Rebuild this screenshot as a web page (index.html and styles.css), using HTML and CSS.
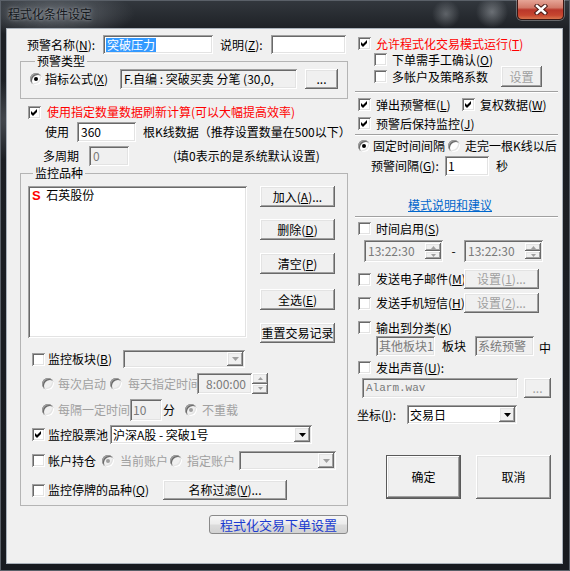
FILE: index.html
```html
<!DOCTYPE html>
<html>
<head>
    <meta charset="utf-8" />
    <title>程式化条件设定</title>
    <link rel="stylesheet" href="styles.css">
</head>
<body>
<div class="win">
    <div class="titlebar">
        <span class="title">程式化条件设定</span>
        <span class="close">
            <svg width="14" height="11" viewBox="0 0 14 11"><path class="xo" d="M3 2 L11 9 M11 2 L3 9" /><path class="xi" d="M3 2 L11 9 M11 2 L3 9" /></svg>
        </span>
    </div>
    <div class="client">
        <!-- 左边 -->
        <div class="left">
            <div class="row name-row">
                <span class="name-lb">预警名称(<u>N</u>):</span>
                <span class="ed name-ed"><span class="sel">突破压力</span></span>
                <span class="desc-lb">说明(<u>Z</u>):</span>
                <span class="ed desc-ed"></span>
            </div>

            <fieldset class="grp type-grp">
                <legend>预警类型</legend>
                <div class="row type-row">
                    <span class="rd on"></span>
                    <span class="type-lb">指标公式(<u>X</u>)</span>
                    <span class="ed ro formula">F.自编 : 突破买卖 分笔 (30,0,</span>
                    <span class="btn dots-btn">...</span>
                </div>
            </fieldset>

            <div class="row refresh-row">
                <span class="cb"><svg viewBox="0 0 11 11"><path d="M2 4 L4 6 L8 2 L8 5 L4 9 L2 7 Z" /></svg></span>
                <span class="red refresh-lb">使用指定数量数据刷新计算(可以大幅提高效率)</span>
            </div>
            <div class="row use-row">
                <span class="use-lb">使用</span>
                <span class="ed use-ed">360</span>
                <span class="use-tip">根K线数据（推荐设置数量在500以下）</span>
            </div>
            <div class="row period-row">
                <span class="period-lb">多周期</span>
                <span class="ed dis period-ed">0</span>
                <span class="period-tip">(填0表示的是系统默认设置)</span>
            </div>

            <fieldset class="grp watch-grp">
                <legend>监控品种</legend>
                <div class="list-block">
                    <div class="lst">
                        <div class="item"><b>S</b> 石英股份</div>
                    </div>
                    <div class="list-btns">
                        <span class="btn">加入(<u>A</u>)...</span>
                        <span class="btn">删除(<u>D</u>)</span>
                        <span class="btn">清空(<u>P</u>)</span>
                        <span class="btn">全选(<u>E</u>)</span>
                        <span class="btn">重置交易记录</span>
                    </div>
                </div>

                <div class="row block-row">
                    <span class="cb"></span>
                    <span class="block-lb">监控板块(<u>B</u>)</span>
                    <span class="cmb dis block-cmb"><span class="cmb-t"></span><span class="drop"><svg width="7" height="4" viewBox="0 0 7 4"><path d="M0 0 H7 L3.5 4 Z" /></svg></span></span>
                </div>
                <div class="row reload1 gray">
                    <span class="rd dis"></span>
                    <span class="rl-a">每次启动</span>
                    <span class="rd dis"></span>
                    <span class="rl-b">每天指定时间</span>
                    <span class="ed dis daytime">8:00:00</span>
                    <span class="spin ext">
                        <span class="sp"><svg width="5" height="3" viewBox="0 0 5 3"><path d="M2.5 0 L5 3 H0 Z" /></svg></span>
                        <span class="sp"><svg width="5" height="3" viewBox="0 0 5 3"><path d="M0 0 H5 L2.5 3 Z" /></svg></span>
                    </span>
                </div>
                <div class="row reload2 gray">
                    <span class="rd dis"></span>
                    <span class="rl-c">每隔一定时间</span>
                    <span class="ed dis every-ed">10</span>
                    <span class="rl-min">分</span>
                    <span class="rd dis on norl"></span>
                    <span class="rl-d">不重载</span>
                </div>
                <div class="row pool-row">
                    <span class="cb"><svg viewBox="0 0 11 11"><path d="M2 4 L4 6 L8 2 L8 5 L4 9 L2 7 Z" /></svg></span>
                    <span class="pool-lb">监控股票池</span>
                    <span class="cmb pool-cmb"><span class="cmb-t">沪深A股 - 突破1号</span><span class="drop"><svg width="7" height="4" viewBox="0 0 7 4"><path d="M0 0 H7 L3.5 4 Z" /></svg></span></span>
                </div>
                <div class="row acct-row">
                    <span class="cb"></span>
                    <span class="acct-lb">帐户持仓</span>
                    <span class="rd dis on"></span>
                    <span class="gray acct-a">当前账户</span>
                    <span class="rd dis"></span>
                    <span class="gray acct-b">指定账户</span>
                    <span class="cmb dis acct-cmb"><span class="cmb-t"></span><span class="drop"><svg width="7" height="4" viewBox="0 0 7 4"><path d="M0 0 H7 L3.5 4 Z" /></svg></span></span>
                </div>
                <div class="row halt-row">
                    <span class="cb"></span>
                    <span class="halt-lb">监控停牌的品种(<u>Q</u>)</span>
                    <span class="btn filter-btn">名称过滤(<u>V</u>)...</span>
                </div>
            </fieldset>

            <div class="row order-row">
                <span class="order-btn">程式化交易下单设置</span>
            </div>
        </div>

        <!-- 右边 -->
        <div class="right">
            <div class="row r-allow">
                <span class="cb"><svg viewBox="0 0 11 11"><path d="M2 4 L4 6 L8 2 L8 5 L4 9 L2 7 Z" /></svg></span>
                <span class="red">允许程式化交易模式运行(<u>T</u>)</span>
            </div>
            <div class="row r-manual">
                <span class="cb"></span>
                <span>下单需手工确认(<u>O</u>)</span>
            </div>
            <div class="row r-multi">
                <span class="cb"></span>
                <span class="multi-lb">多帐户及策略系数</span>
                <span class="btn dis set-btn">设置</span>
            </div>
            <div class="sep s1"></div>
            <div class="row r-pop">
                <span class="cb"><svg viewBox="0 0 11 11"><path d="M2 4 L4 6 L8 2 L8 5 L4 9 L2 7 Z" /></svg></span>
                <span class="pop-lb">弹出预警框(<u>L</u>)</span>
                <span class="cb"><svg viewBox="0 0 11 11"><path d="M2 4 L4 6 L8 2 L8 5 L4 9 L2 7 Z" /></svg></span>
                <span>复权数据(<u>W</u>)</span>
            </div>
            <div class="row r-keep">
                <span class="cb"><svg viewBox="0 0 11 11"><path d="M2 4 L4 6 L8 2 L8 5 L4 9 L2 7 Z" /></svg></span>
                <span>预警后保持监控(<u>J</u>)</span>
            </div>
            <div class="sep s2"></div>
            <div class="row r-mode">
                <span class="rd on"></span>
                <span class="fix-lb">固定时间间隔</span>
                <span class="rd"></span>
                <span class="bar-lb">走完一根K线以后</span>
            </div>
            <div class="row r-gap">
                <span class="gap-lb">预警间隔(<u>G</u>):</span>
                <span class="ed gap-ed">1</span>
                <span class="sec">秒</span>
            </div>
            <div class="row r-link">
                <span class="link">模式说明和建议</span>
            </div>
            <div class="sep s3"></div>
            <div class="row r-time">
                <span class="cb"></span>
                <span>时间启用(<u>S</u>)</span>
            </div>
            <div class="row r-times">
                <span class="ed dis ted">13:22:30
                    <span class="spin">
                        <span class="sp"><svg width="5" height="3" viewBox="0 0 5 3"><path d="M2.5 0 L5 3 H0 Z" /></svg></span>
                        <span class="sp"><svg width="5" height="3" viewBox="0 0 5 3"><path d="M0 0 H5 L2.5 3 Z" /></svg></span>
                    </span>
                </span>
                <span class="dash">-</span>
                <span class="ed dis ted">13:22:30
                    <span class="spin">
                        <span class="sp"><svg width="5" height="3" viewBox="0 0 5 3"><path d="M2.5 0 L5 3 H0 Z" /></svg></span>
                        <span class="sp"><svg width="5" height="3" viewBox="0 0 5 3"><path d="M0 0 H5 L2.5 3 Z" /></svg></span>
                    </span>
                </span>
            </div>
            <div class="row r-mail">
                <span class="cb"></span>
                <span class="send-lb">发送电子邮件(<u>M</u>)</span>
                <span class="btn dis send-btn">设置(<u>1</u>)...</span>
            </div>
            <div class="row r-sms">
                <span class="cb"></span>
                <span class="send-lb">发送手机短信(<u>H</u>)</span>
                <span class="btn dis send-btn">设置(<u>2</u>)...</span>
            </div>
            <div class="row r-out">
                <span class="cb"></span>
                <span>输出到分类(<u>K</u>)</span>
            </div>
            <div class="row r-cat">
                <span class="ed dis cat-ed">其他板块1</span>
                <span class="cat-lb">板块</span>
                <span class="ed dis cat-ed cat2">系统预警</span>
                <span class="cat-in">中</span>
            </div>
            <div class="row r-sound">
                <span class="cb"></span>
                <span>发出声音(<u>U</u>):</span>
            </div>
            <div class="row r-wav">
                <span class="ed dis wav-ed">Alarm.wav</span>
                <span class="btn dis wav-btn">...</span>
            </div>
            <div class="row r-axis">
                <span class="axis-lb">坐标(<u>I</u>):</span>
                <span class="cmb axis-cmb"><span class="cmb-t">交易日</span><span class="drop"><svg width="7" height="4" viewBox="0 0 7 4"><path d="M0 0 H7 L3.5 4 Z" /></svg></span></span>
            </div>
            <div class="row r-ok">
                <span class="btn def ok-btn">确定</span>
                <span class="btn ok-btn cancel">取消</span>
            </div>
        </div>
    </div>
</div>
</body>
</html>
```

FILE: styles.css
```css
body {
    margin: 0;
    font-family: "Noto Sans CJK SC", "Noto Sans", sans-serif;
    font-size: 12px;
    line-height: 14px;
    color: #000;
    background: #fff;
}

u {
    text-decoration: underline;
    text-underline-offset: 1px;
}

/* 窗口外框 */
.win {
    width: 570px;
    height: 571px;
    display: flex;
    flex-direction: column;
    background:
        radial-gradient(circle at 446px 14px, rgba(160, 165, 170, .45) 0, rgba(160, 165, 170, 0) 14px),
        radial-gradient(circle at 492px 12px, rgba(160, 165, 170, .55) 0, rgba(160, 165, 170, 0) 16px),
        radial-gradient(ellipse 80px 26px at 55px 14px, rgba(120, 125, 132, .75), rgba(120, 125, 132, 0)),
        radial-gradient(ellipse 60px 40px at 10px 120px, rgba(110, 115, 122, .5), rgba(110, 115, 122, 0)),
        linear-gradient(#33383e, #1d2025 30px, #181b20);
    box-shadow: inset 1px 1px 0 #5a6068, inset -1px -1px 0 #5a6068;
}

.titlebar {
    height: 28px;
    display: flex;
    align-items: flex-start;
    flex: none;
}

.title {
    margin: 7px 0 0 8px;
    color: #15181c;
    text-shadow: 0 0 3px rgba(170, 176, 182, .8), 0 0 7px rgba(170, 176, 182, .5);
}

.close {
    margin: 0 6px 0 auto;
    width: 47px;
    height: 20px;
    box-sizing: border-box;
    border: 1px solid #3b1612;
    border-top: 0;
    border-radius: 0 0 5px 5px;
    background: linear-gradient(#e6a597, #d27a6a 40%, #b9372a 52%, #c6452f 80%, #d8744c);
    box-shadow: 0 0 0 1px rgba(255, 255, 255, .3);
    display: flex;
    align-items: center;
    justify-content: center;
}

.close .xo {
    stroke: #4a1a14;
    stroke-width: 4.5;
    stroke-linecap: square;
}

.close .xi {
    stroke: #fff;
    stroke-width: 2.5;
    stroke-linecap: square;
}

.client {
    flex: none;
    height: 536px;
    margin: 0 7px 0 6px;
    box-sizing: border-box;
    border: 1px solid #a9b1ba;
    background: #f0f0f0;
    display: flex;
    padding: 6px 0 0 13px;
}

.left {
    width: 328px;
    flex: none;
}

.right {
    width: 203px;
    margin-left: 7px;
    flex: none;
}

.row {
    display: flex;
    align-items: center;
    flex: none;
    white-space: nowrap;
}

.red { color: #ff0000; }
.gray, .gray span { color: #a0a0a0; }

/* 基本控件 */
.cb {
    width: 13px;
    height: 13px;
    flex: none;
    background: #fff;
    box-shadow: inset 1px 1px #a0a0a0, inset -1px -1px #fff, inset 2px 2px #696969, inset -2px -2px #e3e3e3;
}

.cb svg {
    display: block;
    width: 11px;
    height: 11px;
    margin: 1px;
}

.rd {
    width: 12px;
    height: 12px;
    flex: none;
    border-radius: 50%;
    background: #fff;
    box-shadow: inset 1px 1px #a0a0a0, inset -1px -1px #fff, inset 2px 2px #696969, inset -2px -2px #e3e3e3;
    display: flex;
    align-items: center;
    justify-content: center;
}

.rd.on::after {
    content: "";
    width: 4px;
    height: 4px;
    border-radius: 50%;
    background: #000;
}

.rd.dis { background: #f0f0f0; }
.rd.dis.on::after { background: #a0a0a0; }

.ed {
    box-sizing: border-box;
    display: flex;
    align-items: center;
    background: #fff;
    box-shadow: inset 1px 1px #a0a0a0, inset -1px -1px #fff, inset 2px 2px #696969, inset -2px -2px #e3e3e3;
    padding: 0 4px;
    overflow: hidden;
    white-space: nowrap;
    flex: none;
}

.ed.ro, .ed.dis { background: #f0f0f0; }
.ed.dis { color: #7a7a7a; }

.btn {
    box-sizing: border-box;
    display: flex;
    align-items: center;
    justify-content: center;
    background: #f0f0f0;
    box-shadow: inset -1px -1px #696969, inset 1px 1px #fff, inset -2px -2px #a0a0a0, inset 2px 2px #e3e3e3;
    flex: none;
    white-space: nowrap;
}

.btn.dis { color: #a0a0a0; }

.btn.def {
    border: 1px solid #5a5a5a;
}

.cmb {
    box-sizing: border-box;
    display: flex;
    align-items: stretch;
    background: #fff;
    box-shadow: inset 1px 1px #a0a0a0, inset -1px -1px #fff, inset 2px 2px #696969, inset -2px -2px #e3e3e3;
    padding: 2px;
    flex: none;
}

.cmb.dis { background: #f0f0f0; }

.cmb-t {
    flex: 1;
    display: flex;
    align-items: center;
    padding-left: 1px;
    overflow: hidden;
}

.drop {
    width: 16px;
    flex: none;
    display: flex;
    align-items: center;
    justify-content: center;
    background: #f0f0f0;
    box-shadow: inset -1px -1px #696969, inset 1px 1px #fff, inset -2px -2px #a0a0a0, inset 2px 2px #e3e3e3;
}

.drop svg path { fill: #000; }
.cmb.dis .drop svg path { fill: #a0a0a0; }

.spin {
    width: 16px;
    display: flex;
    flex-direction: column;
    align-self: stretch;
    flex: none;
}

.sp {
    flex: 1;
    display: flex;
    align-items: center;
    justify-content: center;
    background: #f0f0f0;
    box-shadow: inset -1px -1px #696969, inset 1px 1px #fff, inset -2px -2px #a0a0a0, inset 2px 2px #e3e3e3;
}

.sp svg path { fill: #a0a0a0; }

fieldset.grp {
    margin: 0;
    box-sizing: border-box;
    width: 328px;
    min-width: 0;
    border: 1px solid #b4b4b4;
}

.grp legend {
    padding: 0 2px;
    margin-left: 5px;
    line-height: 14px;
}

.sep {
    height: 0;
    border-top: 1px solid #a0a0a0;
    border-bottom: 1px solid #fff;
}

/* 左边各行 */
.name-row { height: 19px; }
.name-lb { margin-left: 7px; width: 76px; flex: none; }
.name-ed { width: 110px; height: 19px; padding-left: 3px; }
.sel { background: #3399ff; color: #fff; padding: 0 1px; line-height: 14px; }
.desc-lb { margin-left: 7px; width: 51px; flex: none; }
.desc-ed { width: 75px; height: 19px; }

.type-grp { margin-top: 6px; padding: 0 8px 8px 9px; }
.type-row { height: 22px; }
.type-lb { margin-left: 3px; width: 75px; flex: none; }
.formula { width: 177px; height: 20px; }
.dots-btn { width: 33px; height: 20px; margin-left: 8px; }

.refresh-row { margin-top: 6px; height: 14px; }
.refresh-row .cb { margin-left: 8px; }
.refresh-lb { margin-left: 6px; }

.use-row { margin-top: 3px; height: 20px; }
.use-lb { margin-left: 25px; width: 32px; flex: none; }
.use-ed { width: 59px; height: 20px; }
.use-tip { margin-left: 7px; }

.period-row { margin-top: 4px; height: 20px; }
.period-lb { margin-left: 23px; width: 46px; flex: none; }
.period-ed { width: 40px; height: 20px; }
.period-tip { margin-left: 44px; }

.watch-grp { margin-top: 2px; padding: 0 0 5px 7px; }

.list-block {
    display: flex;
    align-items: flex-start;
    margin-top: 6px;
}

.lst {
    width: 219px;
    height: 152px;
    box-sizing: border-box;
    background: #fff;
    box-shadow: inset 1px 1px #a0a0a0, inset -1px -1px #fff, inset 2px 2px #696969, inset -2px -2px #e3e3e3;
    padding: 2px 4px;
    flex: none;
}

.item b {
    color: #ff0000;
    font-family: "Liberation Sans", sans-serif;
    font-size: 13px;
    margin-right: 3px;
}

.list-btns {
    margin-left: 13px;
    width: 75px;
    display: flex;
    flex-direction: column;
}

.list-btns .btn { height: 21px; }
.list-btns .btn:nth-child(2) { margin-top: 12px; }
.list-btns .btn:nth-child(3) { margin-top: 13px; }
.list-btns .btn:nth-child(4) { margin-top: 15px; }
.list-btns .btn:nth-child(5) { margin-top: 13px; height: 20px; }

.block-row { margin-top: 7px; height: 18px; }
.block-row .cb, .pool-row .cb, .acct-row .cb, .halt-row .cb { margin-left: 4px; }
.block-lb { margin-left: 3px; width: 75px; flex: none; }
.block-cmb { width: 122px; height: 18px; }

.reload1 { margin-top: 5px; height: 21px; }
.reload1 .rd:first-child, .reload2 .rd:first-child { margin-left: 14px; }
.rl-a { margin-left: 4px; width: 52px; flex: none; }
.rl-b { margin-left: 6px; width: 69px; flex: none; }
.daytime { width: 55px; height: 21px; justify-content: flex-end; padding-right: 6px; }
.spin.ext { height: 21px; }

.reload2 { margin-top: 5px; height: 22px; }
.rl-c { margin-left: 4px; width: 72px; flex: none; }
.every-ed { width: 32px; height: 22px; padding-left: 3px; }
.reload2 .rl-min { margin-left: 1px; width: 12px; flex: none; color: #000; }
.norl { margin-left: 10px; }
.rl-d { margin-left: 5px; }

.pool-row { margin-top: 4px; height: 19px; }
.pool-lb { margin-left: 3px; width: 62px; flex: none; }
.pool-cmb { width: 202px; height: 19px; }

.acct-row { margin-top: 7px; height: 19px; }
.acct-lb { margin-left: 3px; width: 54px; flex: none; }
.acct-a { margin-left: 6px; width: 50px; flex: none; }
.acct-b { margin-left: 5px; width: 52px; flex: none; }
.acct-cmb { width: 97px; height: 19px; }

.halt-row { margin-top: 10px; height: 20px; }
.halt-lb { margin-left: 3px; width: 115px; flex: none; }
.filter-btn { width: 124px; height: 20px; }

.order-row { margin-top: 9px; }
.order-btn {
    margin-left: 189px;
    width: 139px;
    height: 19px;
    box-sizing: border-box;
    border: 1px solid #8a8a8a;
    border-radius: 3px;
    background: linear-gradient(#f6f6f6, #ececec 48%, #dcdcdc 52%, #d2d2d2);
    color: #1b3bd0;
    display: flex;
    align-items: center;
    justify-content: center;
    font-size: 13px;
}

/* 右边各行 */
.right .cb + span { margin-left: 5px; }

.r-allow { margin-top: 2px; height: 13px; }
.r-allow .cb, .r-pop .cb:first-child, .r-keep .cb, .r-time .cb,
.r-mail .cb, .r-sms .cb, .r-out .cb, .r-sound .cb { margin-left: 3px; }

.r-manual { margin-top: 3px; height: 13px; }
.r-manual .cb, .r-multi .cb { margin-left: 19px; }
.r-multi { height: 21px; }
.multi-lb { width: 109px; flex: none; }
.set-btn { width: 41px; height: 21px; }

.s1 { margin-top: 4px; }
.r-pop { margin-top: 5px; height: 13px; }
.pop-lb { width: 81px; flex: none; }
.r-pop .pop-lb + .cb { margin-left: 5px; }
.r-keep { margin-top: 6px; height: 13px; }
.s2 { margin-top: 4px; }

.r-mode { margin-top: 3px; height: 13px; }
.r-mode .rd:first-child { margin-left: 3px; }
.fix-lb { margin-left: 3px; width: 75px; flex: none; }
.bar-lb { margin-left: 5px; }

.r-gap { margin-top: 4px; height: 20px; }
.gap-lb { margin-left: 16px; width: 74px; flex: none; }
.gap-ed { width: 44px; height: 20px; padding-left: 3px; }
.sec { margin-left: 7px; }

.r-link { margin-top: 22px; height: 14px; }
.link {
    margin-left: 53px;
    color: #0066cc;
    text-decoration: underline;
}

.s3 { margin-top: 4px; }
.r-time { margin-top: 4px; height: 13px; }

.r-times { margin-top: 5px; height: 22px; }
.ted {
    width: 79px;
    height: 22px;
    padding: 3px 2px 3px 4px;
}
.r-times .ted:first-child { margin-left: 9px; }
.ted .spin { margin-left: auto; }
.dash { width: 21px; text-align: center; flex: none; }

.r-mail { margin-top: 7px; height: 20px; }
.r-sms { margin-top: 4px; height: 20px; }
.send-lb { width: 88px; flex: none; }
.send-btn { width: 75px; height: 20px; }

.r-out { margin-top: 8px; height: 13px; }
.r-cat { margin-top: 2px; height: 20px; }
.cat-ed { width: 59px; height: 20px; margin-left: 21px; padding-left: 3px; }
.cat-ed.cat2 { margin-left: 9px; }
.cat-lb { margin-left: 7px; width: 24px; flex: none; }
.cat-in { margin-left: 5px; margin-top: 4px; }

.r-sound { margin-top: 5px; height: 13px; }
.r-wav { margin-top: 4px; height: 20px; }
.wav-ed { margin-left: 7px; width: 156px; height: 20px; font-family: "Liberation Mono", monospace; font-size: 11px; }
.wav-btn { margin-left: 6px; width: 27px; height: 20px; }

.r-axis { margin-top: 7px; height: 19px; }
.axis-lb { margin-left: 2px; width: 50px; flex: none; }
.axis-cmb { width: 110px; height: 19px; }

.r-ok { margin-top: 31px; height: 44px; }
.ok-btn { width: 75px; height: 44px; margin-left: 31px; }
.ok-btn.cancel { margin-left: 15px; }
```
